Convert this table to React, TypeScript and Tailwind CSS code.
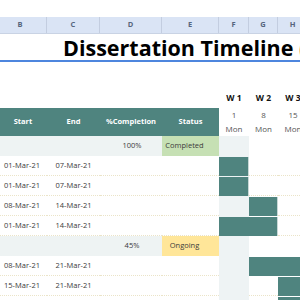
import React from "react";

const TEAL = "bg-[#4f847f]";

type Task = { start: string; end: string; bars: [number, number, number] };

const tasksA: Task[] = [
  { start: "01-Mar-21", end: "07-Mar-21", bars: [1, 0, 0] },
  { start: "01-Mar-21", end: "07-Mar-21", bars: [1, 0, 0] },
  { start: "08-Mar-21", end: "14-Mar-21", bars: [0, 1, 0] },
  { start: "01-Mar-21", end: "14-Mar-21", bars: [1, 1, 0] },
];
const tasksB: Task[] = [
  { start: "08-Mar-21", end: "21-Mar-21", bars: [0, 1, 1] },
  { start: "15-Mar-21", end: "21-Mar-21", bars: [0, 0, 1] },
  { start: "", end: "", bars: [0, 0, 1] },
];

const dot = "border-b border-dotted border-[#ebe4c8]";

function Bar({ on, last }: { on: number; last: boolean }) {
  if (!on) return null;
  return (
    <div
      className={`h-[19px] mt-[1px] ${TEAL} ${last ? "border-r border-[#c8d8d6]" : ""}`}
    />
  );
}

function TaskRow({ t }: { t: Task }) {
  const [f, g, h] = t.bars;
  return (
    <div className="flex h-[20px] ml-[-6px] text-[7.5px] text-[#3a3a3a]">
      <div className={`w-[53px] shrink-0 ${dot} flex items-center justify-center pl-[3px]`}>
        {t.start}
      </div>
      <div className={`w-[53px] shrink-0 ${dot} flex items-center justify-center`}>
        {t.end}
      </div>
      <div className={`w-[62px] shrink-0 ${dot}`} />
      <div className={`w-[57px] shrink-0 ${dot}`} />
      <div className="w-[30px] shrink-0 bg-[#eef3f4]">
        <Bar on={f} last={!g} />
      </div>
      <div className={`w-[29px] shrink-0 ${g ? "" : dot}`}>
        <Bar on={g} last={!h} />
      </div>
      <div className={`w-[30px] shrink-0 ${h ? "" : dot}`}>
        <Bar on={h} last={false} />
      </div>
    </div>
  );
}

function SummaryRow({ pct, status, color }: { pct: string; status: string; color: string }) {
  return (
    <div className="flex h-[20px] ml-[-6px] text-[7.5px] text-[#3a3a3a]">
      <div className="w-[53px] shrink-0 bg-[#eef3f3]" />
      <div className="w-[53px] shrink-0 bg-[#eef3f3]" />
      <div className="w-[62px] shrink-0 bg-[#eef3f3] flex items-center justify-center pl-[2px]">
        {pct}
      </div>
      <div className={`w-[57px] shrink-0 ${color} flex items-center justify-center pr-[12px]`}>
        {status}
      </div>
      <div className="w-[30px] shrink-0 bg-[#eef3f4]" />
      <div className="w-[29px] shrink-0" />
      <div className="w-[30px] shrink-0" />
    </div>
  );
}

export default function App() {
  const letters: [string, string][] = [
    ["B", "w-[53px]"],
    ["C", "w-[53px]"],
    ["D", "w-[62px]"],
    ["E", "w-[57px]"],
    ["F", "w-[30px]"],
    ["G", "w-[29px]"],
    ["H", "w-[30px]"],
  ];
  return (
    <div className="w-[300px] h-[300px] overflow-hidden bg-white font-['Open_Sans',sans-serif]">
      <div className="h-[17px] bg-white" />
      {/* column letters */}
      <div className="flex h-[17px] ml-[-6px] bg-[#dae4f5] border-b border-[#c9d3e4]">
        {letters.map(([l, w]) => (
          <div
            key={l}
            className={`${w} shrink-0 border-r border-[#c3cde0] flex items-center justify-center text-[7.5px] font-bold text-[#56657d]`}
          >
            {l}
          </div>
        ))}
      </div>
      {/* title */}
      <div className="h-[28px] border-b-2 border-[#4d86de] pl-[63px] pt-[1px] whitespace-nowrap overflow-hidden">
        <div className="text-[21.5px] leading-[26px] font-bold text-black">
          Dissertation Timeline (Gantt Chart)
        </div>
      </div>
      <div className="h-[26px]" />
      {/* week row */}
      <div className="flex h-[20px] ml-[-6px] items-center text-[8.5px] font-bold text-[#111]">
        <div className="w-[225px] shrink-0" />
        <div className="w-[30px] shrink-0 text-center">W 1</div>
        <div className="w-[29px] shrink-0 text-center">W 2</div>
        <div className="w-[30px] shrink-0 text-center">W 3</div>
      </div>
      {/* header */}
      <div className="flex h-[28px] ml-[-6px]">
        <div className={`w-[225px] shrink-0 ${TEAL} flex items-center text-[7.5px] font-bold text-white`}>
          <div className="w-[53px] text-center pl-[5px]">Start</div>
          <div className="w-[53px] text-center">End</div>
          <div className="w-[62px] text-center">%Completion</div>
          <div className="w-[57px] text-center">Status</div>
        </div>
        {[
          ["1", "w-[30px]"],
          ["8", "w-[29px]"],
          ["15", "w-[30px]"],
        ].map(([d, w]) => (
          <div
            key={d}
            className={`${w} shrink-0 flex flex-col items-center text-[8px] leading-[14px] text-[#555]`}
          >
            <span>{d}</span>
            <span>Mon</span>
          </div>
        ))}
      </div>
      <SummaryRow pct="100%" status="Completed" color="bg-[#c6e0b4]" />
      {tasksA.map((t, i) => (
        <TaskRow key={"a" + i} t={t} />
      ))}
      <SummaryRow pct="45%" status="Ongoing" color="bg-[#ffe699]" />
      {tasksB.map((t, i) => (
        <TaskRow key={"b" + i} t={t} />
      ))}
    </div>
  );
}
